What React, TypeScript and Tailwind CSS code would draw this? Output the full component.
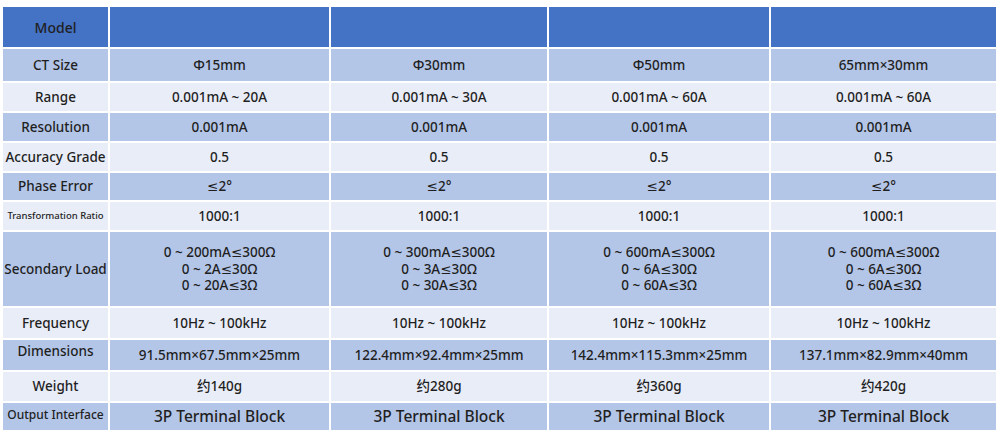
const ROWS: { label: string; labelClass?: string; values: string[]; tone: 'dark' | 'light'; valueClass?: string }[] = [
  { label: 'CT Size', values: ['Φ15mm', 'Φ30mm', 'Φ50mm', '65mm×30mm'], tone: 'dark' },
  { label: 'Range', values: ['0.001mA ~ 20A', '0.001mA ~ 30A', '0.001mA ~ 60A', '0.001mA ~ 60A'], tone: 'light' },
  { label: 'Resolution', values: ['0.001mA', '0.001mA', '0.001mA', '0.001mA'], tone: 'dark' },
  { label: 'Accuracy Grade', values: ['0.5', '0.5', '0.5', '0.5'], tone: 'light' },
  { label: 'Phase Error', values: ['≤2°', '≤2°', '≤2°', '≤2°'], tone: 'dark' },
  { label: 'Transformation Ratio', labelClass: 'text-[9.5px]', values: ['1000:1', '1000:1', '1000:1', '1000:1'], tone: 'light' },
  {
    label: 'Secondary Load',
    values: [
      '0 ~ 200mA≤300Ω\n0 ~ 2A≤30Ω\n0 ~ 20A≤3Ω',
      '0 ~ 300mA≤300Ω\n0 ~ 3A≤30Ω\n0 ~ 30A≤3Ω',
      '0 ~ 600mA≤300Ω\n0 ~ 6A≤30Ω\n0 ~ 60A≤3Ω',
      '0 ~ 600mA≤300Ω\n0 ~ 6A≤30Ω\n0 ~ 60A≤3Ω',
    ],
    tone: 'dark',
  },
  { label: 'Frequency', values: ['10Hz ~ 100kHz', '10Hz ~ 100kHz', '10Hz ~ 100kHz', '10Hz ~ 100kHz'], tone: 'light' },
  {
    label: 'Dimensions',
    labelClass: 'text-[13.5px] pb-[8px]',
    values: ['91.5mm×67.5mm×25mm', '122.4mm×92.4mm×25mm', '142.4mm×115.3mm×25mm', '137.1mm×82.9mm×40mm'],
    tone: 'dark',
  },
  { label: 'Weight', values: ['约140g', '约280g', '约360g', '约420g'], tone: 'light' },
  {
    label: 'Output Interface',
    labelClass: 'text-[12px] pb-[3px]',
    values: ['3P Terminal Block', '3P Terminal Block', '3P Terminal Block', '3P Terminal Block'],
    tone: 'dark',
    valueClass: 'text-[15.5px]',
  },
];

export default function App() {
  return (
    <div
      className="w-[1000px] h-[440px] bg-white pt-[7px] pl-[3px] text-[#1f1f1f] font-medium"
      style={{ fontFamily: '"Noto Sans", "DejaVu Sans", "Noto Sans CJK SC", sans-serif' }}
    >
      <div className="grid grid-cols-[105px_219px_216px_220px_225px] grid-rows-[40px_32px_28px_28px_28px_27px_28px_74px_30px_30px_29px_27px] gap-[2px] w-fit">
        <div className="bg-[#4472c4] flex items-center justify-center text-[14px]">Model</div>
        <div className="bg-[#4472c4]" />
        <div className="bg-[#4472c4]" />
        <div className="bg-[#4472c4]" />
        <div className="bg-[#4472c4]" />

        {ROWS.map((row) => {
          const bg = row.tone === 'dark' ? 'bg-[#b4c6e7]' : 'bg-[#e9edf7]';
          return [
            <div
              key={row.label}
              className={`${bg} flex items-center justify-center text-center whitespace-nowrap ${row.labelClass ?? 'text-[13.5px]'}`}
            >
              {row.label}
            </div>,
            ...row.values.map((v, i) => (
              <div
                key={row.label + i}
                className={`${bg} flex items-center justify-center text-center whitespace-pre leading-[16.5px] ${row.valueClass ?? 'text-[13.5px]'}`}
              >
                {v}
              </div>
            )),
          ];
        })}
      </div>
    </div>
  );
}
